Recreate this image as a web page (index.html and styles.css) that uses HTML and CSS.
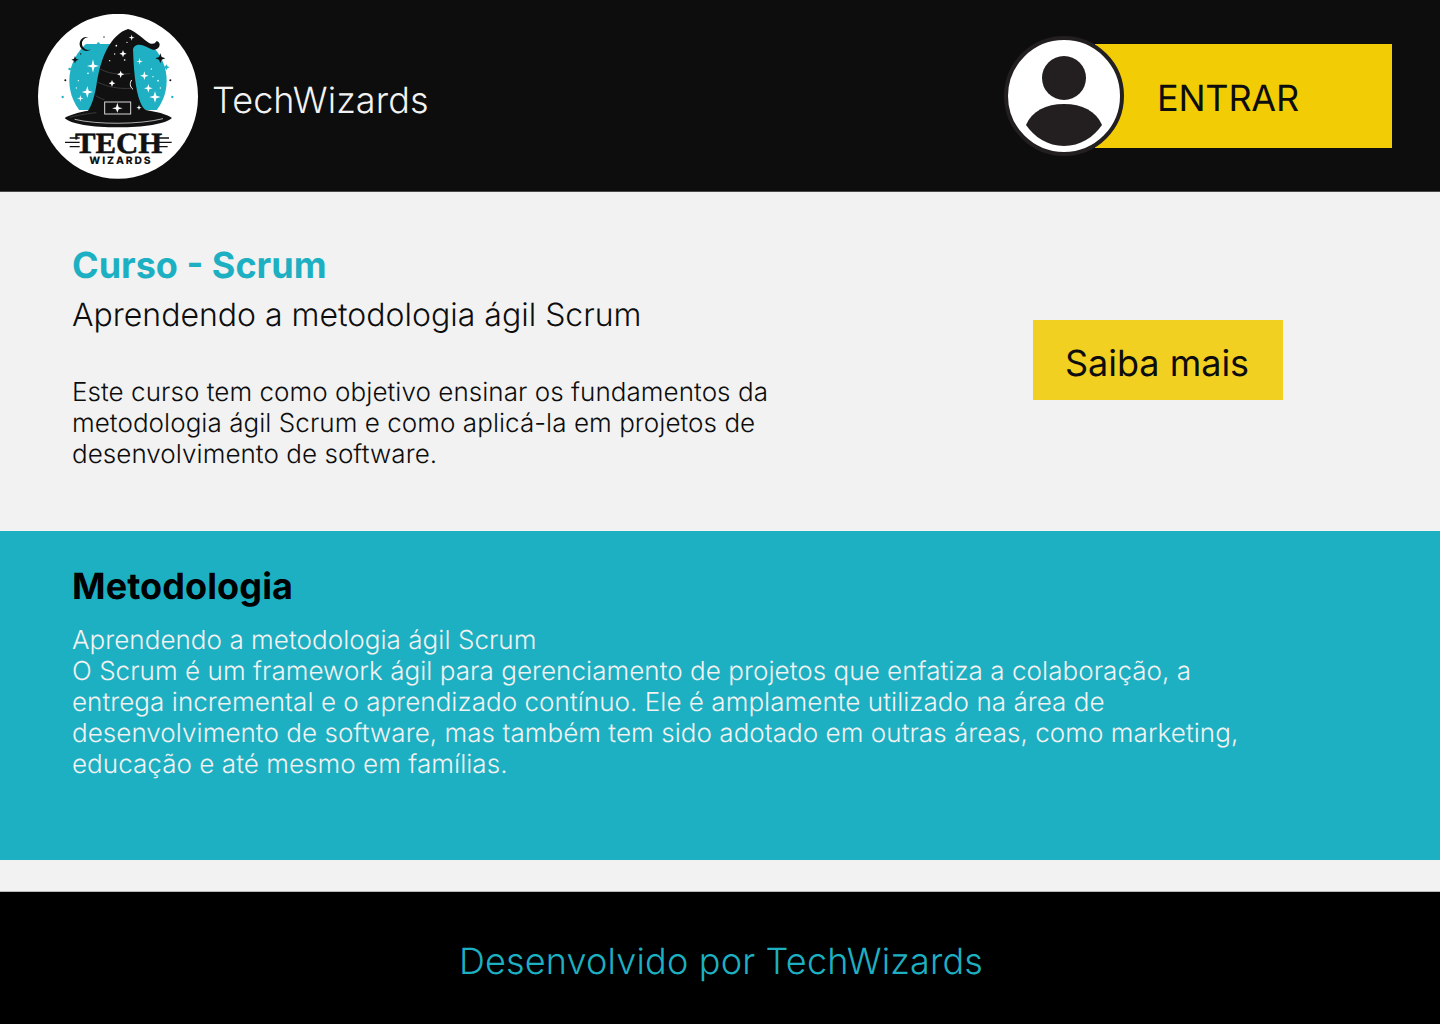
FILE: index.html
```html
<!DOCTYPE html>
<html lang="pt-BR">
<head>
<meta charset="utf-8">
<title>TechWizards</title>
<link rel="stylesheet" href="styles.css">
</head>
<body>
<header class="topbar">
  <div class="brand">
    <svg class="logo" viewBox="55 40 480 495" aria-label="Tech Wizards">
      <defs><clipPath id="disc"><rect x="140" y="130" width="310" height="198"/></clipPath></defs>
      <ellipse cx="295" cy="287" rx="240" ry="247.500" fill="#fff"/>
      <circle cx="295" cy="240" r="146" fill="#1fb0c4" clip-path="url(#disc)"/>
      <g fill="#fff">
        <path d="M220 176l4 16 14 4-14 4-4 16-4-16-14-4 14-4z"/>
        <path d="M203 256l4 14 13 4-13 4-4 14-4-14-13-4 13-4z"/>
        <path d="M182 283l2 8 8 2-8 2-2 8-2-8-8-2 8-2z"/>
        <path d="M374 212l3 10 10 3-10 3-3 10-3-10-10-3 10-3z"/>
        <path d="M386 250l3 10 10 3-10 3-3 10-3-10-10-3 10-3z"/>
        <path d="M406 272l4 13 13 4-13 4-4 13-4-13-13-4 13-4z"/>
        <path d="M360 172l2 8 8 2-8 2-2 8-2-8-8-2 8-2z"/>
        <circle cx="176" cy="240" r="2"/><circle cx="205" cy="218" r="2.500"/><circle cx="415" cy="240" r="2.500"/><circle cx="395" cy="205" r="2"/><circle cx="400" cy="228" r="2"/><circle cx="225" cy="300" r="2"/><circle cx="170" cy="262" r="2"/><circle cx="422" cy="262" r="2"/>
      </g>
      <path fill="#111" d="M325 85C345 90 362 108 385 125C395 132 406 131 410 122C418 122 422 130 419 137C415 146 405 150 396 146C383 140 368 129 352 133C345 135 341 140 340 146C342 200 346 265 362 305C366 316 372 324 378 328C410 333 440 340 457 352C440 370 370 380 295 380C220 380 150 370 135 352C150 342 180 334 205 330C215 316 224 290 230 255C236 215 246 175 262 145C276 118 300 92 325 85Z"/>
      <path fill="none" stroke="#fff" stroke-width="2" d="M165 356C230 372 360 372 430 354"/>
      <path fill="none" stroke="#3a3a3a" stroke-width="3" d="M242 205c20 12 50 18 90 14M235 245c30 14 60 20 100 18M228 285c10 6 18 10 26 12M150 350c30-8 60-12 80-14"/>
      <rect x="255" y="304" width="78" height="36" fill="#111" stroke="#d8d8d8" stroke-width="3"/>
      <g fill="#fff">
        <path d="M293 306l4 14 12 3-12 3-4 10-4-10-12-3 12-3z"/>
        <path d="M336 102l2 7 7 2-7 2-2 7-2-7-7-2 7-2z"/>
        <path d="M310 148l3 8 8 3-8 3-3 8-3-8-8-3 8-3z"/>
        <path d="M303 210l3 8 8 3-8 3-3 8-3-8-8-3 8-3z"/>
        <path d="M277 238l3 7 7 3-7 3-3 7-3-7-7-3 7-3z"/>
        <path d="M358 313l2 6 6 2-6 2-2 6-2-6-6-2 6-2z"/>
        <circle cx="290" cy="135" r="2.500"/><circle cx="315" cy="178" r="2.500"/><circle cx="322" cy="125" r="2"/><circle cx="270" cy="180" r="2"/><circle cx="285" cy="160" r="2"/>
      </g>
      <path fill="none" stroke="#fff" stroke-width="3" d="M336 238c-6 8-6 20 4 28"/>
      <path fill="#111" d="M208 110A21 21 0 1 0 214 146A19 19 0 1 1 208 110Z"/>
      <path fill="#111" d="M166 166l3 8 8 3-8 3-3 8-3-8-8-3 8-3zM422 158l4 11 11 4-11 4-4 11-4-11-11-4 11-4z"/>
      <g fill="#1fb0c4">
        <path d="M440 191l3 6 7 3-7 3-3 6-3-6-7-3 7-3z"/>
        <circle cx="236" cy="129" r="4.500"/><circle cx="150" cy="205" r="4"/><circle cx="129" cy="289" r="3.500"/><circle cx="458" cy="289" r="3.500"/>
      </g>
      <g fill="#111"><circle cx="137" cy="239" r="3"/><circle cx="452" cy="239" r="3"/><circle cx="183" cy="160" r="2"/><circle cx="253" cy="109" r="2"/></g>
      <path stroke="#111" stroke-width="4" fill="none" d="M150 412h30M136 425h44M150 438h30M418 412h30M412 425h44M418 438h26"/>
      <text class="logo-tech" x="297" y="458" text-anchor="middle" textLength="262" lengthAdjust="spacingAndGlyphs">TECH</text>
      <text class="logo-wiz" x="301" y="491" text-anchor="middle" textLength="184" lengthAdjust="spacing">WIZARDS</text>
    </svg>
    <span class="brand-name">TechWizards</span>
  </div>
  <a class="login" href="#">
    <svg class="avatar" viewBox="0 0 120 120" aria-hidden="true">
      <circle cx="60" cy="60" r="58" fill="#fff" stroke="#231f20" stroke-width="4"/>
      <circle cx="60" cy="42" r="22" fill="#231f20"/>
      <path fill="#231f20" d="M22 89c6-14 20-21 38-21s32 7 38 21c-8 12-22 21-38 21s-30-9-38-21z"/>
    </svg>
    <span class="login-label">ENTRAR</span>
  </a>
</header>
<main>
  <section class="course">
    <div class="course-text">
      <h1 class="course-title">Curso - Scrum</h1>
      <h2 class="course-sub">Aprendendo a metodologia ágil Scrum</h2>
      <p class="course-desc">Este curso tem como objetivo ensinar os fundamentos da metodologia ágil Scrum e como aplicá-la em projetos de desenvolvimento de software.</p>
    </div>
    <a class="more" href="#">Saiba mais</a>
  </section>
  <section class="method">
    <h2 class="method-title">Metodologia</h2>
    <p class="method-text">Aprendendo a metodologia ágil Scrum<br>O Scrum é um framework ágil para gerenciamento de projetos que enfatiza a colaboração, a entrega incremental e o aprendizado contínuo. Ele é amplamente utilizado na área de desenvolvimento de software, mas também tem sido adotado em outras áreas, como marketing, educação e até mesmo em famílias.</p>
  </section>
</main>
<footer class="footer">Desenvolvido por TechWizards</footer>
</body>
</html>
```
FILE: styles.css
```css
* { box-sizing: border-box; }
html, body { margin: 0; }
body {
  width: 1440px;
  height: 1024px;
  overflow: hidden;
  background: #f2f2f2;
  font-family: Inter, "Liberation Sans", sans-serif;
  color: #0d0d0d;
  text-rendering: geometricPrecision;
}
.topbar {
  height: 192px;
  background: #0d0d0d;
  border-bottom: 1px solid #4a4a4a;
  display: flex;
  align-items: flex-start;
  justify-content: space-between;
  padding: 14px 48px 0 38px;
}
.brand { display: flex; align-items: center; gap: 14px; }
.logo { width: 160px; height: 165px; display: block; }
.brand-name { color: #f2f2f2; font-size: 36px; font-weight: 300; line-height: 44px; margin-top: 6px; letter-spacing: 0.1px; }
.logo-tech { font-family: "Liberation Serif", serif; font-weight: 700; font-size: 88px; fill: #111; stroke: #111; stroke-width: 1.500px; }
.logo-wiz { font-family: Inter, sans-serif; font-weight: 800; font-size: 31px; fill: #111; }
.login {
  display: flex;
  align-items: center;
  margin-top: 22px;
  color: #0d0d0d;
  text-decoration: none;
}
.avatar { width: 120px; height: 120px; display: block; margin-right: -29px; position: relative; z-index: 1; }
.login-label {
  width: 297px;
  height: 104px;
  background: #f2cd05;
  font-size: 36px;
  font-weight: 400;
  line-height: 108px;
  padding-left: 62px;
  letter-spacing: -0.2px;
}
.course {
  height: 339px;
  padding: 51px 157px 0 72px;
  display: flex;
  align-items: flex-start;
  justify-content: space-between;
}
.course-text { width: 720px; }
.course-title { margin: 0; color: #1db0c2; font-size: 36px; font-weight: 700; line-height: 44px; }
.course-sub { margin: 8px 0 0; font-size: 32px; font-weight: 300; line-height: 39px; }
.course-desc { margin: 43px 0 0; font-size: 26px; font-weight: 300; line-height: 31px; letter-spacing: 0.05px; }
.more {
  width: 250px;
  height: 80px;
  margin-top: 77px;
  padding-right: 2px;
  background: #f2d022;
  color: #0d0d0d;
  text-decoration: none;
  font-size: 36px;
  line-height: 87px;
  text-align: center;
}
.method {
  height: 329px;
  background: #1db0c2;
  padding: 33px 190px 0 72px;
}
.method-title { margin: 0; color: #000; font-size: 36px; font-weight: 700; line-height: 44px; letter-spacing: 0.1px; }
.method-text { margin: 17px 0 0; color: #f2f2f2; font-size: 26px; font-weight: 300; line-height: 31px; letter-spacing: 0.05px; }
.footer {
  height: 133px;
  margin-top: 31px;
  padding-left: 2px;
  background: #000;
  border-top: 1px solid #b9b9b9;
  color: #1db0c2;
  font-size: 36px;
  font-weight: 300;
  line-height: 138px;
  text-align: center;
  letter-spacing: 0.18px;
}
```
